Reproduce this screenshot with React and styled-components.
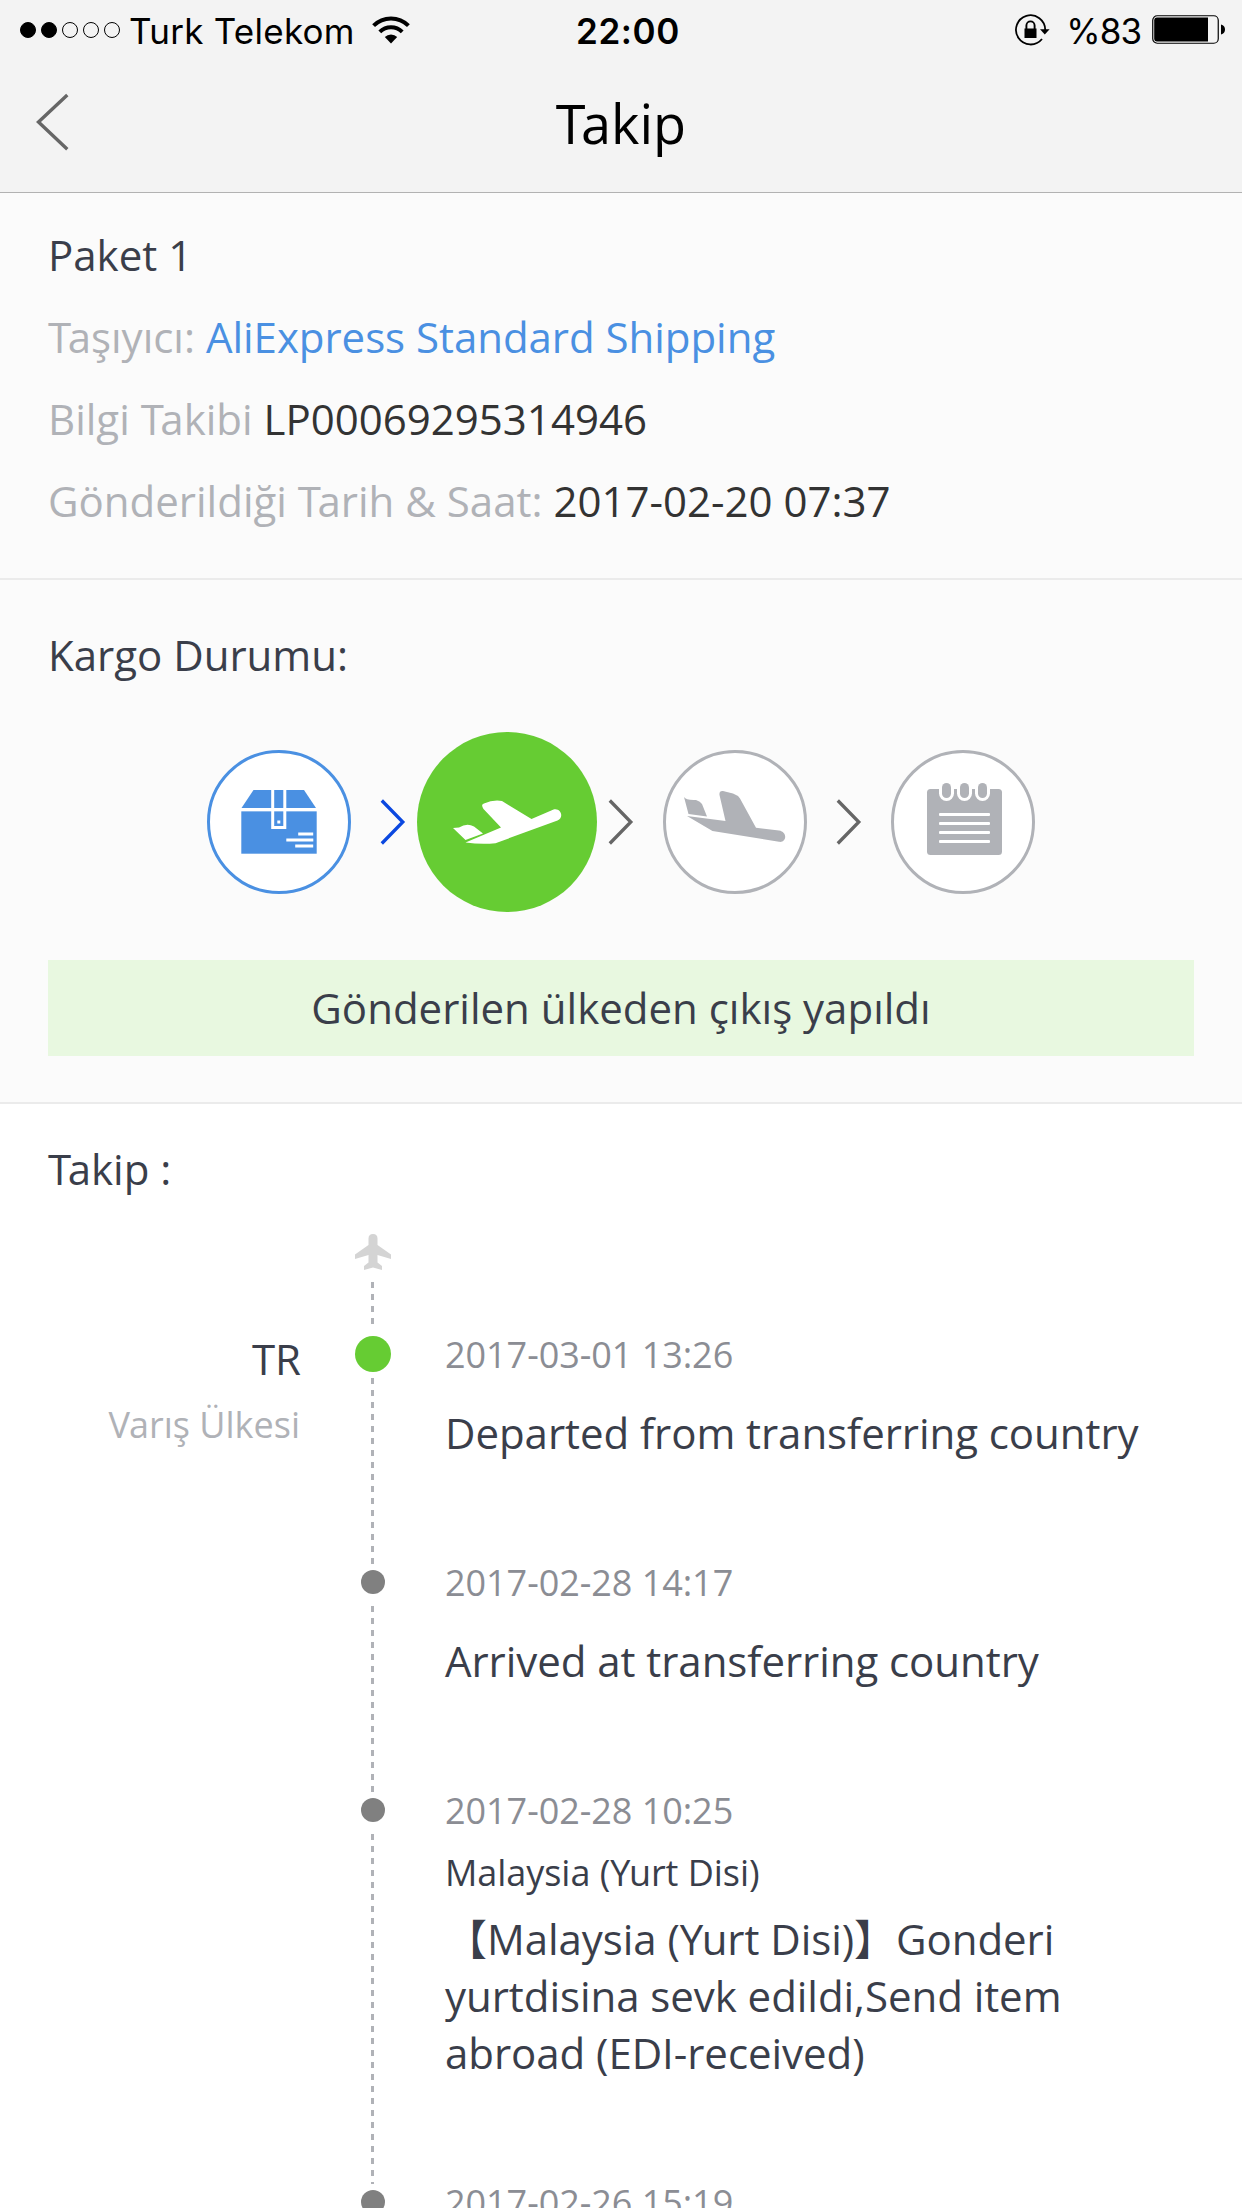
import React from 'react';
import styled, { createGlobalStyle } from 'styled-components';

const GlobalStyle = createGlobalStyle`
    * {
        box-sizing: border-box;
    }
    body {
        margin: 0;
        background: #fff;
        font-family: 'Open Sans', 'Noto Sans CJK SC', sans-serif;
        overflow: hidden;
    }
`;

const Screen = styled.div`
    display: flex;
    flex-direction: column;
    width: 1242px;
    height: 2208px;
    overflow: hidden;
`;

const Header = styled.header`
    height: 193px;
    flex: none;
    background: #f3f3f3;
    border-bottom: 1px solid #b2b2b2;
`;

const StatusBar = styled.div`
    display: grid;
    grid-template-columns: 1fr auto 1fr;
    align-items: center;
    height: 60px;
    padding: 0 17px 0 20px;
    font-family: Inter, sans-serif;
    font-size: 35px;
    line-height: 58px;
    color: #000;
`;

const StatusSide = styled.div`
    display: flex;
    align-items: center;
    justify-content: ${props => (props.$end ? 'flex-end' : 'flex-start')};
`;

const Signal = styled.div`
    display: flex;
    gap: 5px;
    margin-right: 9px;
`;

const SignalDot = styled.span`
    width: 16px;
    height: 16px;
    border-radius: 50%;
    border: 1px solid #000;
    background: ${props => (props.$on ? '#000' : 'transparent')};
`;

const Carrier = styled.span`
    letter-spacing: 0.25px;
    padding-top: 2px;
    margin-right: 17px;
`;

const Clock = styled.span`
    font-weight: 600;
    letter-spacing: 0.6px;
    padding: 2px 0 0 11px;
`;

const Percent = styled.span`
    letter-spacing: -1px;
    padding-top: 2px;
    margin: 0 11px 0 15px;
`;

const NavBar = styled.div`
    display: grid;
    grid-template-columns: 1fr auto 1fr;
    align-items: center;
    height: 132px;
    padding: 0 35px;
`;

const BackButton = styled.button`
    display: flex;
    width: 36px;
    height: 60px;
    padding: 0;
    border: none;
    background: none;
    margin-top: -9px;
`;

const Title = styled.h1`
    margin: 0;
    font-size: 54px;
    line-height: 74px;
    font-weight: 400;
    color: #000;
    margin-top: -6px;
`;

const Section = styled.section`
    flex: none;
    padding: 0 48px;
    background: #fbfbfb;
    border-bottom: 2px solid #ebebeb;
    height: ${props => props.$height}px;
    padding-top: ${props => props.$top}px;
`;

const Line = styled.div`
    font-size: 42px;
    line-height: 82px;
    color: #3a3e4a;
`;

const Label = styled.span`
    color: #b0b2b7;
`;

const Value = styled.span`
    letter-spacing: ${props => (props.$link ? '-0.04px' : 'normal')};
    color: ${props => (props.$link ? '#4a90e2' : '#333')};
`;

const Tight = styled.span`
    letter-spacing: ${props => props.$by}em;
`;

const Steps = styled.div`
    display: flex;
    align-items: center;
    justify-content: center;
    height: 180px;
    margin-top: 36px;
`;

// 180 wide slot + 48 wide arrow = 228 between the circle centers
const StepSlot = styled.div`
    display: flex;
    justify-content: center;
    width: 180px;
`;

const StepCircle = styled.div`
    display: flex;
    width: ${props => (props.$active ? 180 : 144)}px;
    height: ${props => (props.$active ? 180 : 144)}px;
    border-radius: 50%;
    background: ${props => (props.$active ? '#66cc33' : '#fff')};
    border: ${props => (props.$active ? 'none' : `3px solid ${props.$color}`)};
    align-items: center;
    justify-content: center;

    svg {
        flex: none;
    }
`;

const StepArrow = styled.div`
    display: flex;
    width: 48px;
    padding-left: 11px;
`;

const Banner = styled.div`
    height: 96px;
    margin-top: 48px;
    background: #e8f8e0;
    font-size: 42px;
    line-height: 96px;
    text-align: center;
    color: #3a3e4a;
`;

const Tracking = styled.section`
    flex: 1;
    min-height: 0;
    padding: 24px 48px 0;
    background: #fff;
`;

const Row = styled.div`
    display: grid;
    grid-template-columns: 253px 36px 1fr;
    column-gap: 54px;
    height: ${props => props.$height}px;
`;

const Place = styled.div`
    text-align: right;
    line-height: 45px;
    font-size: 42px;
    color: #3a3e4a;
`;

const PlaceNote = styled.div`
    font-size: 36px;
    line-height: 87px;
    padding-right: 1px;
    color: #b0b2b7;
`;

const Rail = styled.div`
    display: flex;
    flex-direction: column;
    align-items: center;
    padding: ${props => (props.$first ? '24px 0 12px' : '0')};
`;

const DotBox = styled.div`
    display: flex;
    flex: none;
    align-items: center;
    justify-content: center;
    width: 36px;
    height: 36px;
`;

const Dot = styled.span`
    width: ${props => (props.$active ? 36 : 24)}px;
    height: ${props => (props.$active ? 36 : 24)}px;
    border-radius: 50%;
    background: ${props => (props.$active ? '#66cc33' : '#808080')};
`;

const Dashes = styled.div`
    flex: 1;
    width: 3px;
    margin: ${props => props.$gap}px 1px 0 0;
    background: repeating-linear-gradient(#b0b2b7 0 6px, transparent 6px 12px);
`;

const Info = styled.div`
    font-size: 42px;
    line-height: 57px;
    letter-spacing: -0.05px;
    color: #3a3e4a;
`;

const When = styled.div`
    font-size: 36px;
    line-height: 38px;
    color: #8b8d94;
    margin-bottom: ${props => (props.$tight ? 18 : 30)}px;
`;

const Where = styled.div`
    font-size: 36px;
    line-height: 50px;
    margin-bottom: 12px;
`;

const WifiIcon = () => (
    <svg width="38" height="28" viewBox="0 0 38 28" fill="none" stroke="#000">
        <path d="M1.6 9.6 A24.6 24.6 0 0 1 36.4 9.6" strokeWidth="4" />
        <path d="M7.8 15.9 A15.8 15.8 0 0 1 30.2 15.9" strokeWidth="4" />
        <path d="M12.8 21 A8.8 8.8 0 0 1 25.2 21 L19 27.4 Z" fill="#000" stroke="none" />
    </svg>
);

const RotationLockIcon = () => (
    <svg width="36" height="32" viewBox="0 0 36 32" fill="none" stroke="#000">
        <path d="M30.2 16 A14.6 14.6 0 1 0 27 25" strokeWidth="1.8" />
        <path d="M25 15.2 H34.6 L29.8 20.4 Z" fill="#000" stroke="none" />
        <rect x="9.5" y="14.5" width="12" height="9.5" fill="#000" stroke="none" />
        <path d="M11.4 15 V11.5 A4.1 4.1 0 0 1 19.6 11.5 V15" strokeWidth="1.9" />
    </svg>
);

const BatteryIcon = () => (
    <svg width="73" height="30" viewBox="0 0 73 30">
        <rect x="0.75" y="0.75" width="65.5" height="27.5" rx="4.5" fill="none" stroke="#000" strokeWidth="1.2" />
        <path d="M5 2.5 H56 V26.5 H5 Q2.2 26.5 2.2 23.5 V5.5 Q2.2 2.5 5 2.5 Z" />
        <path d="M69 9.5 Q73 10.5 73 14.5 Q73 18.5 69 19.5 Z" />
    </svg>
);

const BackIcon = () => (
    <svg width="36" height="60" viewBox="0 0 36 60" fill="none" stroke="#666" strokeWidth="3.4">
        <path d="M32.3 3 L3.5 30 L32.3 57.2" />
    </svg>
);

const ArrowIcon = ({ color }) => (
    <svg width="26" height="48" viewBox="0 0 26 48" fill="none" stroke={color} strokeWidth="3.3">
        <path d="M1.8 2.5 L22.8 24 L1.8 45.5" />
    </svg>
);

const BoxIcon = () => (
    <svg width="76" height="64" viewBox="0 0 76 64" fill="#4a90e2">
        <path d="M12.5 0 H63 L75 18 H0.5 Z" />
        <rect x="0.3" y="21.2" width="75.4" height="42.5" />
        <g fill="#fff">
            <path d="M30.2 0 H33.2 V36 H42.3 V0 H45.3 V39 H30.2 Z" />
            <rect x="0" y="18" width="76" height="3.2" />
            <rect x="36.3" y="30.5" width="3" height="3" />
            <rect x="57.2" y="42.5" width="15" height="3" />
            <rect x="45.3" y="48.5" width="27" height="3" />
            <rect x="54.2" y="54.5" width="18" height="3" />
        </g>
    </svg>
);

const DepartIcon = () => (
    <svg width="180" height="180" viewBox="0 0 180 180" fill="#fff">
        <path d="M36 96 L42 95.5 Q50 90.5 57 94.5 L66 101.5 L48.5 108 Z" />
        <path d="M84 95.5 L66.5 77 Q63.5 72.5 67 71.5 Q76 67.5 85 69 L114.5 87 L136 77.8 C143 75 148 85 140.5 88.5 L78.5 111.2 Q64 112.5 48.5 110.5 Z" />
    </svg>
);

const ArriveIcon = () => (
    <svg width="144" height="144" viewBox="0 0 144 144" fill="#b0b2b7">
        <path d="M21 47 Q23 50.5 33 50 Q37.5 51.5 39 54 L44 66.5 L25.5 64 Z" />
        <path d="M24 66 L62.5 71 L56.5 45 Q56 40.5 60 41 L70 43.5 Q74.5 45 77 48.5 L93 77.8 L116 80.5 C125 82 123.5 93 116 91.8 L49.5 81 Z" />
    </svg>
);

const NoteIcon = () => (
    <svg width="144" height="144" viewBox="0 0 144 144" fill="#b0b2b7">
        <rect x="36" y="39" width="75" height="66" rx="3.5" />
        {[51, 69, 87].map(x => (
            <g key={x}>
                <rect x={x - 3} y="30" width="15" height="21" rx="7.5" fill="#fff" />
                <rect x={x} y="33" width="9" height="15" rx="4.5" />
            </g>
        ))}
        {[63, 72, 81, 90].map(y => (
            <rect key={y} x="48" y={y} width="51" height="3" rx="1" fill="#fff" />
        ))}
    </svg>
);

const PlaneIcon = () => (
    <svg width="36" height="36" viewBox="0 0 36 36" fill="#d4d4d4">
        <path d="M13.5 4.5 Q13.5 0 18 0 Q22.5 0 22.5 4.5 V11 L36 20.5 V25 L22.5 21 V28.5 L27 32 V36 L18 33.5 L9 36 V32 L13.5 28.5 V21 L0 25 V20.5 L13.5 11 Z" />
    </svg>
);

// pairs that the font leaves too wide
const pairs = { T: -0.083, V: -0.03, Y: -0.04 };

const Kerned = ({ children }) =>
    children.split(/([TV](?=a)|Y(?=u))/).map((part, i) =>
        pairs[part] ? <Tight key={i} $by={pairs[part]}>{part}</Tight> : part
    );

const steps = [
    { icon: <BoxIcon />, color: '#4a90e2', arrow: '#0b48e0' },
    { icon: <DepartIcon />, active: true, arrow: '#666' },
    { icon: <ArriveIcon />, color: '#b0b2b7', arrow: '#666' },
    { icon: <NoteIcon />, color: '#b0b2b7' },
];

const events = [
    { when: '2017-03-01 13:26', text: 'Departed from transferring country', place: 'TR', note: 'Varış Ülkesi', active: true, height: 228 },
    { when: '2017-02-28 14:17', text: 'Arrived at transferring country', height: 228 },
    {
        when: '2017-02-28 10:25',
        where: 'Malaysia (Yurt Disi)',
        text: '【Malaysia (Yurt Disi)】Gonderi yurtdisina sevk edildi,Send item abroad (EDI-received)',
        height: 392,
    },
    { when: '2017-02-26 15:19', text: '', height: 228 },
];

const EventRow = ({ when, where, text, place, note, active, height }) => (
    <Row $height={height}>
        <Place>
            {place}
            {note && <PlaceNote><Kerned>{note}</Kerned></PlaceNote>}
        </Place>
        <Rail>
            <DotBox>
                <Dot $active={active} />
            </DotBox>
            <Dashes $gap={6} />
        </Rail>
        <Info>
            <When $tight={!!where}>{when}</When>
            {where && <Where><Kerned>{where}</Kerned></Where>}
            <Kerned>{text}</Kerned>
        </Info>
    </Row>
);

const App = () => (
    <Screen>
        <GlobalStyle />
        <Header>
            <StatusBar>
                <StatusSide>
                    <Signal>
                        {[1, 1, 0, 0, 0].map((on, i) => <SignalDot key={i} $on={on} />)}
                    </Signal>
                    <Carrier>Turk Telekom</Carrier>
                    <WifiIcon />
                </StatusSide>
                <Clock>22:00</Clock>
                <StatusSide $end>
                    <RotationLockIcon />
                    <Percent>%83</Percent>
                    <BatteryIcon />
                </StatusSide>
            </StatusBar>
            <NavBar>
                <BackButton><BackIcon /></BackButton>
                <Title><Kerned>Takip</Kerned></Title>
            </NavBar>
        </Header>
        <Section $height={387} $top={21}>
            <Line>Paket 1</Line>
            <Line><Label><Kerned>Taşıyıcı:</Kerned></Label> <Value $link>AliExpress Standard Shipping</Value></Line>
            <Line><Label><Kerned>Bilgi Takibi</Kerned></Label> <Value>LP00069295314946</Value></Line>
            <Line><Label><Kerned>{'Gönderildiği Tarih & Saat:'}</Kerned></Label> <Value>2017-02-20 07:37</Value></Line>
        </Section>
        <Section $height={524} $top={34}>
            <Line>Kargo Durumu:</Line>
            <Steps>
                {steps.map((step, i) => (
                    <React.Fragment key={i}>
                        <StepSlot>
                            <StepCircle $active={step.active} $color={step.color}>{step.icon}</StepCircle>
                        </StepSlot>
                        {step.arrow && <StepArrow><ArrowIcon color={step.arrow} /></StepArrow>}
                    </React.Fragment>
                ))}
            </Steps>
            <Banner>Gönderilen ülkeden çıkış yapıldı</Banner>
        </Section>
        <Tracking>
            <Line><Kerned>Takip :</Kerned></Line>
            <Row $height={126}>
                <span />
                <Rail $first>
                    <PlaneIcon />
                    <Dashes $gap={12} />
                </Rail>
            </Row>
            {events.map(event => <EventRow key={event.when} {...event} />)}
        </Tracking>
    </Screen>
);

export default App;
